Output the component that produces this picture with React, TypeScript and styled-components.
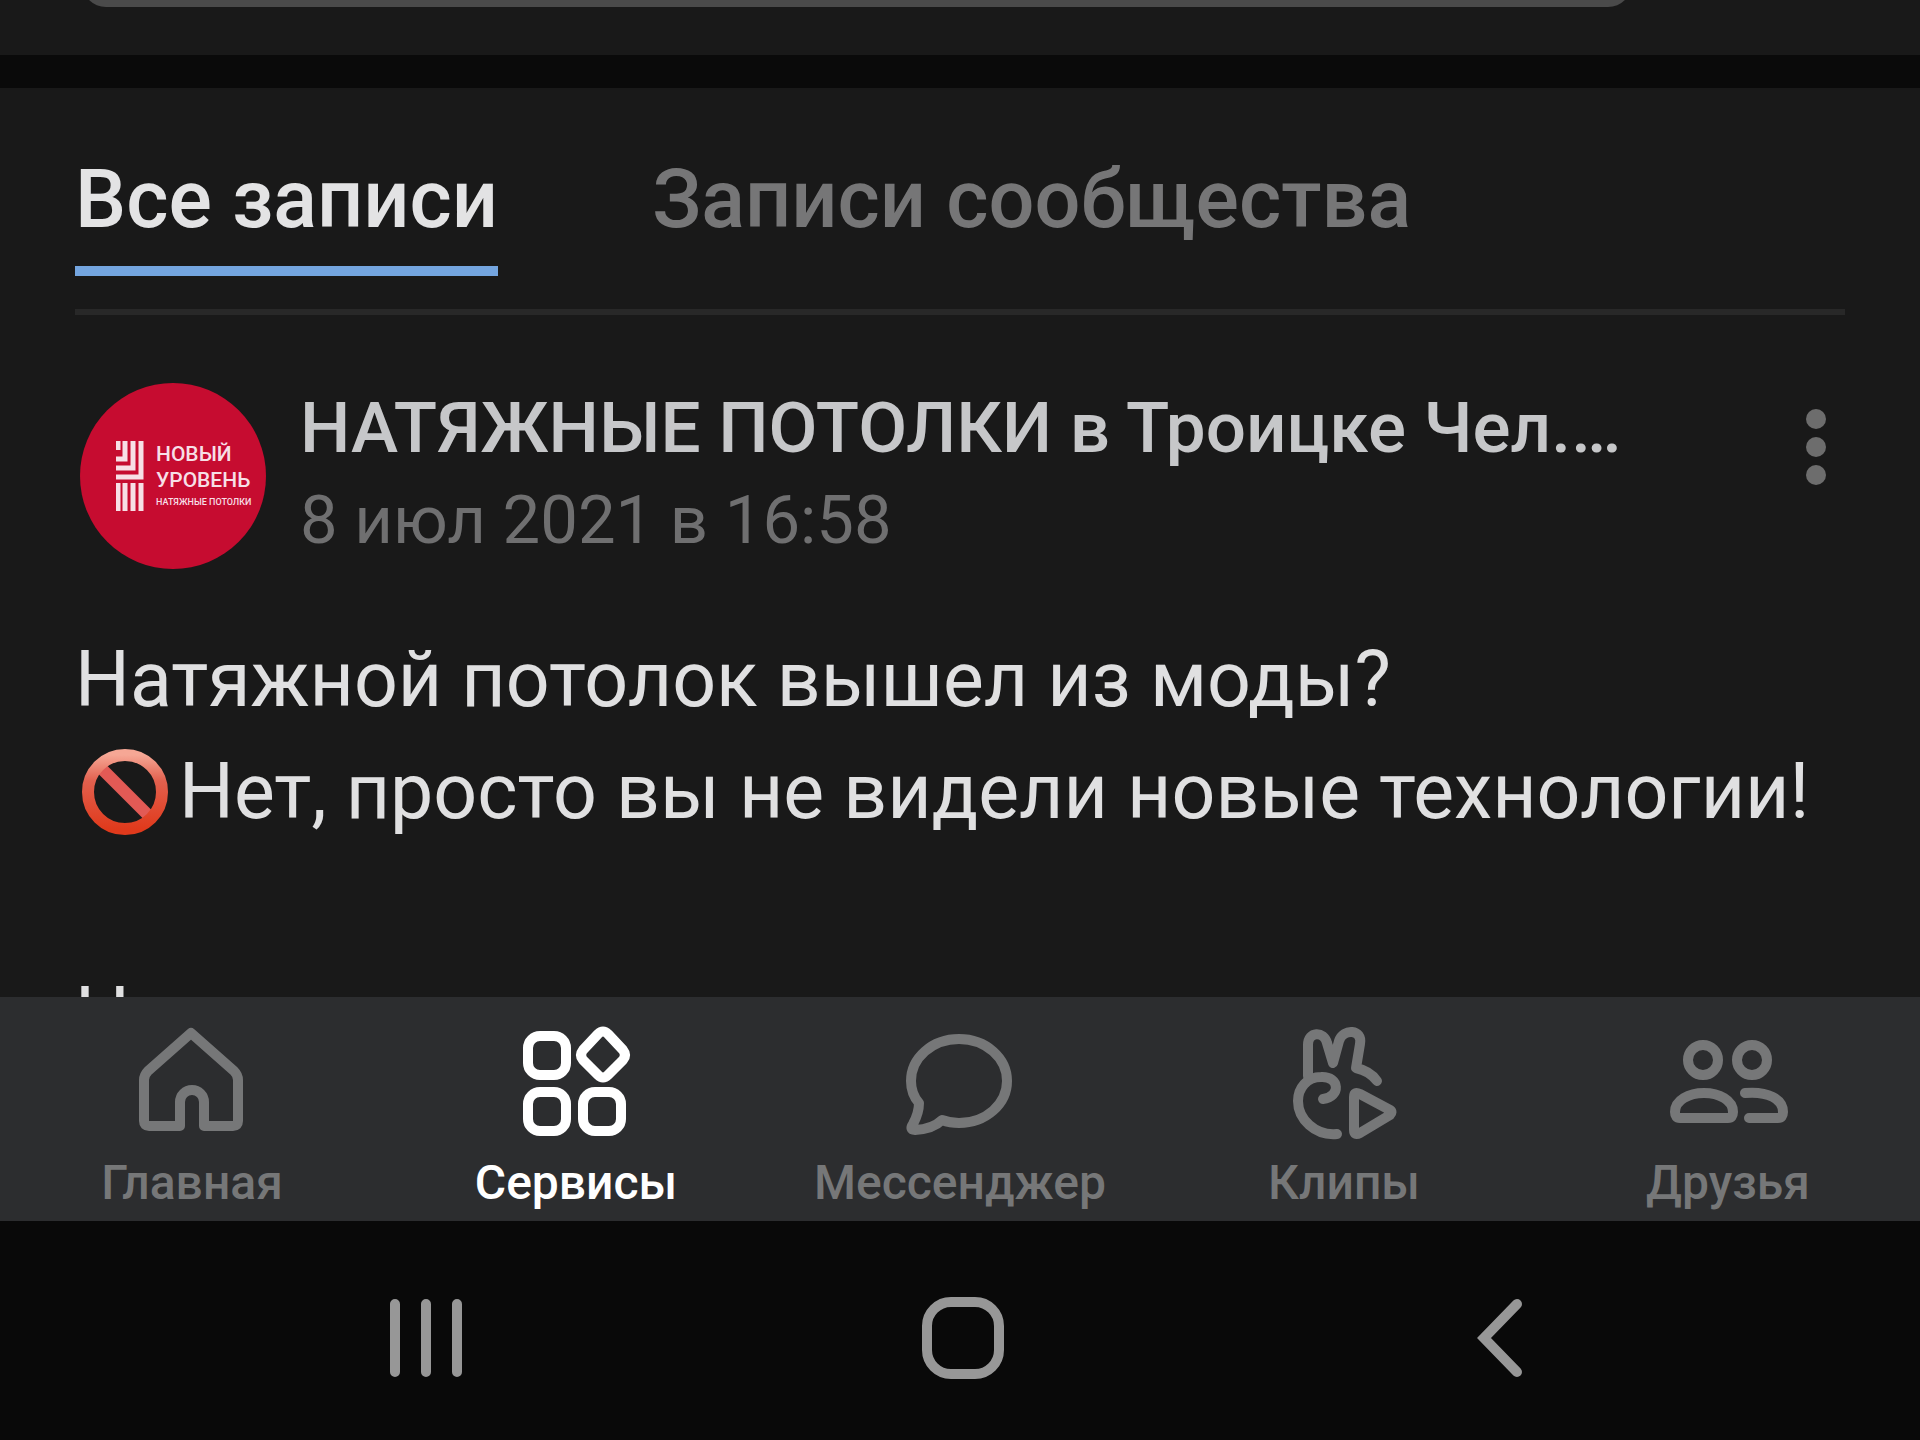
import React from "react";
import styled, { createGlobalStyle } from "styled-components";

const GlobalStyle = createGlobalStyle`
  *, *::before, *::after { box-sizing: border-box; }
  body {
    margin: 0;
    background: #191919;
    font-family: Roboto, "Noto Sans", sans-serif;
  }
  button { font: inherit; }
`;

const Screen = styled.div`
  display: flex;
  flex-direction: column;
  height: 100vh;
  overflow: hidden;
`;

const Feed = styled.main`
  flex: 1;
  min-height: 0;
  overflow: hidden;
`;

const PreviousBlock = styled.div`
  display: flex;
  align-items: flex-end;
  height: 55px;
  padding: 0 288px 48px 82px;
  overflow: hidden;
`;

const PreviousPill = styled.div`
  flex: 1;
  height: 80px;
  flex-shrink: 0;
  border-radius: 24px;
  background: #4a4a4a;
`;

const Separator = styled.div`
  height: 33px;
  background: #0a0a0a;
`;

const Tabs = styled.div`
  display: flex;
  gap: 154px;
  margin: 0 75px;
  padding: 64px 0 33px;
  border-bottom: 6px solid #282828;
`;

const Tab = styled.button<{ $active?: boolean }>`
  padding: 0 0 18px;
  border: 0;
  border-bottom: 10px solid ${(p) => (p.$active ? "#74a5df" : "transparent")};
  background: none;
  color: ${(p) => (p.$active ? "#e3e3e4" : "#767677")};
  font-size: 81px;
  font-weight: 500;
  line-height: 96px;
  white-space: nowrap;
  cursor: pointer;
`;

const Post = styled.article`
  padding: 68px 75px 0;
`;

const PostHeader = styled.header`
  display: flex;
  align-items: flex-start;
  padding-left: 5px;
`;

const Avatar = styled.div`
  display: flex;
  align-items: center;
  flex: none;
  gap: 12px;
  width: 186px;
  height: 186px;
  padding-left: 36px;
  border-radius: 50%;
  background: #c60c30;
`;

const AvatarText = styled.div`
  color: #f7dfe6;
  font-size: 21px;
  font-weight: 500;
  line-height: 26px;
  white-space: nowrap;
`;

const AvatarCaption = styled.div`
  font-size: 9px;
  line-height: 18px;
`;

const Author = styled.div`
  flex: 1;
  min-width: 0;
  padding-left: 34px;
`;

const AuthorName = styled.div`
  color: #c6c7c9;
  font-size: 71px;
  font-weight: 500;
  line-height: 90px;
  white-space: nowrap;
`;

const PostDate = styled.time`
  display: block;
  color: #6f6f70;
  font-size: 67px;
  line-height: 94px;
`;

const MoreButton = styled.button`
  display: flex;
  flex-direction: column;
  align-items: center;
  gap: 8px;
  margin: 26px 19px 0 0;
  padding: 0;
  border: 0;
  background: none;
  cursor: pointer;
`;

const Dot = styled.span`
  width: 20px;
  height: 20px;
  border-radius: 50%;
  background: #6d6d6d;
`;

const PostText = styled.p`
  margin: 55px 0 0;
  color: #e0e0e1;
  font-size: 77px;
  line-height: 112px;
  white-space: nowrap;
`;

const Emoji = styled.svg`
  width: 88px;
  height: 88px;
  margin: 0 10px 0 6px;
  vertical-align: -18px;
`;

const TabBar = styled.nav`
  display: grid;
  grid-template-columns: repeat(5, 1fr);
  padding: 24px 0 10px;
  background: #2c2d2f;
`;

const TabItem = styled.button<{ $active?: boolean }>`
  display: flex;
  flex-direction: column;
  align-items: center;
  gap: 14px;
  padding: 0;
  border: 0;
  background: none;
  color: ${(p) => (p.$active ? "#ffffff" : "#767778")};
  font-size: 48px;
  font-weight: 500;
  line-height: 56px;
  cursor: pointer;
`;

const TabIcon = styled.svg`
  width: 120px;
  height: 120px;
  fill: none;
  stroke: currentColor;
  stroke-width: 10;
  stroke-linecap: round;
  stroke-linejoin: round;
`;

const SystemBar = styled.footer`
  display: grid;
  grid-template-columns: repeat(3, 1fr);
  align-items: center;
  justify-items: center;
  height: 219px;
  padding: 15px 152px 0 160px;
  background: #090909;
`;

const SystemButton = styled.button`
  display: flex;
  padding: 0;
  border: 0;
  background: none;
  color: #979797;
  cursor: pointer;
`;

const SystemIcon = styled.svg`
  width: 88px;
  height: 88px;
  fill: none;
  stroke: currentColor;
  stroke-width: 10;
  stroke-linecap: round;
  stroke-linejoin: miter;
`;

const HomeIcon = () => (
  <TabIcon viewBox="0 0 120 120" aria-hidden>
    <path d="M59 12 L102 50 Q106 54 106 59 V100 Q106 105 101 105 H72 V81 A12 12 0 0 0 48 81 V105 H17 Q12 105 12 100 V59 Q12 54 16 50 Z" />
  </TabIcon>
);

const ServicesIcon = () => (
  <TabIcon viewBox="0 0 120 120" aria-hidden>
    <rect x="12" y="15" width="38" height="39" rx="12" />
    <rect x="12" y="71" width="38" height="39" rx="12" />
    <rect x="67" y="71" width="38" height="39" rx="12" />
    <path d="M82 13 Q87 8 92 13 L107 29 Q111 34 107 39 L92 54 Q87 59 82 54 L67 39 Q63 34 67 29 Z" />
  </TabIcon>
);

const MessengerIcon = () => (
  <TabIcon viewBox="0 0 120 120" aria-hidden>
    <path d="M59 18 C86 18 107 37 107 60 S86 102 59 102 Q50 102 42 99 Q33 108 15 109 Q9 109 13 103 Q19 92 19 82 Q11 73 11 60 C11 37 32 18 59 18 Z" />
  </TabIcon>
);

const ClipsIcon = () => (
  <TabIcon viewBox="0 0 120 120" aria-hidden>
    <path d="M24 55 V24 C24 10 40 10 43 22 L49 42 L55 20 C59 7 79 8 76 23 L72 47 Q86 50 93 60" />
    <path d="M39 78 C57 76 56 55 37 56 C23 56 14 67 14 80 C14 98 31 115 53 113" />
    <path d="M70 76 Q70 70 76 73 L106 89 Q109 91 106 94 L76 112 Q70 115 70 109 Z" />
  </TabIcon>
);

const FriendsIcon = () => (
  <TabIcon viewBox="0 0 120 120" aria-hidden>
    <circle cx="35" cy="39" r="15" />
    <circle cx="84" cy="39" r="15" />
    <path d="M12 97 H60 Q65 97 65 91 C65 79 51 72 36 72 S7 79 7 91 Q7 97 12 97 Z" />
    <path d="M77 72 C100 70 115 78 115 91 Q115 97 110 97 H81" />
  </TabIcon>
);

const LogoMark = () => (
  <svg width="28" height="70" viewBox="0 0 28 70" fill="none" stroke="#f7dfe6" strokeWidth="5" aria-hidden>
    <path d="M2 0 V9 M9 0 V18 H0 M17 0 V27 H0 M25 0 V36 H0" />
    <path d="M2 42 V70 M9 42 V70 M17 42 V70 M25 42 V70" />
  </svg>
);

const NoEntryEmoji = () => (
  <Emoji viewBox="0 0 88 88" role="img" aria-label="Запрещено">
    <defs>
      <linearGradient id="ring" x1="0" y1="0" x2="0" y2="1">
        <stop offset="0" stopColor="#f6a795" />
        <stop offset="0.35" stopColor="#e2604e" />
        <stop offset="1" stopColor="#e03a1c" />
      </linearGradient>
    </defs>
    <path d="M18 18 L70 70" stroke="#e25a55" strokeWidth="12" />
    <circle cx="44" cy="44" r="37" fill="none" stroke="url(#ring)" strokeWidth="12" />
  </Emoji>
);

const tabs = [
  { label: "Главная", Icon: HomeIcon },
  { label: "Сервисы", Icon: ServicesIcon, active: true },
  { label: "Мессенджер", Icon: MessengerIcon },
  { label: "Клипы", Icon: ClipsIcon },
  { label: "Друзья", Icon: FriendsIcon },
];

export default function App() {
  return (
    <Screen>
      <GlobalStyle />
      <Feed>
        <PreviousBlock>
          <PreviousPill />
        </PreviousBlock>
        <Separator />
        <Tabs>
          <Tab $active>Все записи</Tab>
          <Tab>Записи сообщества</Tab>
        </Tabs>
        <Post>
          <PostHeader>
            <Avatar>
              <LogoMark />
              <AvatarText>
                НОВЫЙ
                <br />
                УРОВЕНЬ
                <AvatarCaption>НАТЯЖНЫЕ ПОТОЛКИ</AvatarCaption>
              </AvatarText>
            </Avatar>
            <Author>
              <AuthorName>НАТЯЖНЫЕ ПОТОЛКИ в Троицке Чел.…</AuthorName>
              <PostDate dateTime="2021-07-08T16:58">8 июл 2021 в 16:58</PostDate>
            </Author>
            <MoreButton aria-label="Ещё">
              <Dot />
              <Dot />
              <Dot />
            </MoreButton>
          </PostHeader>
          <PostText>
            Натяжной потолок вышел из моды?
            <br />
            <NoEntryEmoji />
            Нет, просто вы не видели новые технологии!
            <br />
            <br />Н
          </PostText>
        </Post>
      </Feed>
      <TabBar>
        {tabs.map(({ label, Icon, active }) => (
          <TabItem key={label} $active={active}>
            <Icon />
            {label}
          </TabItem>
        ))}
      </TabBar>
      <SystemBar>
        <SystemButton aria-label="Недавние">
          <SystemIcon viewBox="0 0 88 88">
            <path d="M11 10 V78 M42 10 V78 M73 10 V78" />
          </SystemIcon>
        </SystemButton>
        <SystemButton aria-label="Домой">
          <SystemIcon viewBox="0 0 88 88">
            <rect x="7" y="8" width="72" height="72" rx="24" />
          </SystemIcon>
        </SystemButton>
        <SystemButton aria-label="Назад">
          <SystemIcon viewBox="0 0 88 88">
            <path d="M61 10 L28 44 L61 78" />
          </SystemIcon>
        </SystemButton>
      </SystemBar>
    </Screen>
  );
}
